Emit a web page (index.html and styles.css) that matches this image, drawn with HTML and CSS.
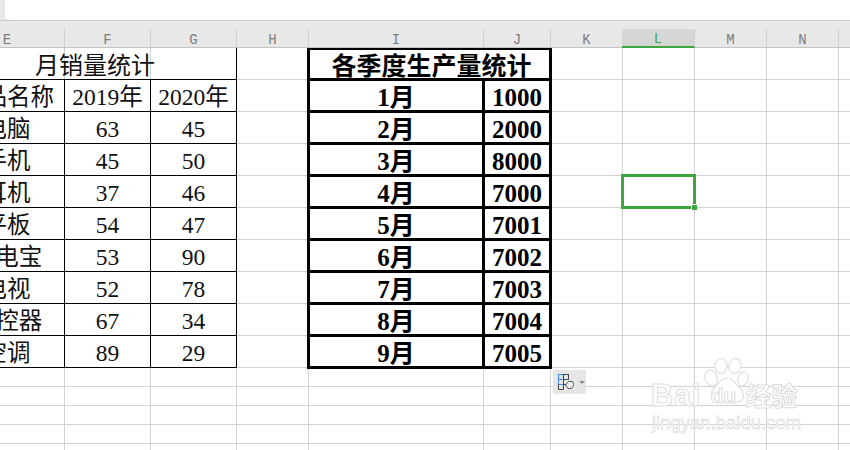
FILE: index.html
```html
<!DOCTYPE html>
<html lang="zh-CN">
<head>
<meta charset="utf-8">
<title>各季度生产量统计</title>
<link rel="stylesheet" href="styles.css">
</head>
<body>
<div class="app">
  <div class="formula-strip"><div class="formula-bar"></div></div>
  <div class="col-header">
    <div class="col">E</div><div class="col">F</div><div class="col">G</div><div class="col">H</div>
    <div class="col">I</div><div class="col">J</div><div class="col">K</div>
    <div class="col col-active">L</div><div class="col">M</div><div class="col">N</div><div class="col"></div>
  </div>
  <div class="sheet">
    <div class="cell title span-3">月销量统计</div>
    <div class="cell first">产品名称</div><div class="cell">2019年</div><div class="cell">2020年</div>
    <div class="cell first">电脑</div><div class="cell">63</div><div class="cell">45</div>
    <div class="cell first">手机</div><div class="cell">45</div><div class="cell">50</div>
    <div class="cell first">耳机</div><div class="cell">37</div><div class="cell">46</div>
    <div class="cell first">平板</div><div class="cell">54</div><div class="cell">47</div>
    <div class="cell first">充电宝</div><div class="cell">53</div><div class="cell">90</div>
    <div class="cell first">电视</div><div class="cell">52</div><div class="cell">78</div>
    <div class="cell first">遥控器</div><div class="cell">67</div><div class="cell">34</div>
    <div class="cell first">空调</div><div class="cell">89</div><div class="cell">29</div>

    <div class="prod">
      <div class="pcell prod-title">各季度生产量统计</div>
      <div class="pcell">1月</div><div class="pcell">1000</div>
      <div class="pcell">2月</div><div class="pcell">2000</div>
      <div class="pcell">3月</div><div class="pcell">8000</div>
      <div class="pcell">4月</div><div class="pcell">7000</div>
      <div class="pcell">5月</div><div class="pcell">7001</div>
      <div class="pcell">6月</div><div class="pcell">7002</div>
      <div class="pcell">7月</div><div class="pcell">7003</div>
      <div class="pcell">8月</div><div class="pcell">7004</div>
      <div class="pcell">9月</div><div class="pcell">7005</div>
    </div>

    <div class="selected"><span class="handle"></span></div>

    <div class="paste-options">
      <svg class="paste-icon" width="16" height="16" viewBox="0 0 16 16" fill="none">
        <rect x="0.5" y="0.5" width="5" height="5" fill="#cfe0fb" stroke="#4a86e8"/>
        <rect x="5.5" y="0.5" width="5" height="5" stroke="#444"/>
        <rect x="0.5" y="5.5" width="5" height="5" stroke="#4a86e8"/>
        <path d="M0.5 10.5V15.5H5.5V10.5M5.5 5.5V10.5H8" stroke="#444"/>
        <path d="M10.5 7.5L14.5 7.5L16 11L13.5 14.5H10L7.5 11Z" fill="#eee" stroke="#555"/>
      </svg>
      <span class="caret"></span>
    </div>
  </div>

  <div class="watermark">
    <svg class="paw" width="46" height="46" viewBox="0 0 46 46" fill="#fff" stroke="#dedede" stroke-width="1.2">
      <ellipse cx="8" cy="20" rx="6" ry="8" transform="rotate(-20 8 20)"/>
      <ellipse cx="18" cy="8" rx="6" ry="7.5"/>
      <ellipse cx="32" cy="8" rx="6" ry="7.5" transform="rotate(10 32 8)"/>
      <ellipse cx="40" cy="21" rx="5" ry="7" transform="rotate(15 40 21)"/>
      <path d="M24 20C18 20 16 25 12 29C7 33 7 43 15 44C19 45 21 43 24 43C28 43 31 45 35 44C43 42 41 33 36 29C32 25 30 20 24 20Z"/>
    </svg>
    <div class="wm-brand"><span class="wm-bai">Bai</span><span class="wm-du">du</span><span class="wm-cn">经验</span></div>
    <div class="wm-url">jingyan.baidu.com</div>
  </div>
</div>
</body>
</html>
```

FILE: styles.css
```css
* { box-sizing: border-box; }

html, body {
  margin: 0;
  padding: 0;
  width: 850px;
  height: 450px;
  overflow: hidden;
  background: #fff;
}

.app {
  position: relative;
  width: 850px;
  height: 450px;
  overflow: hidden;
  font-family: "Liberation Serif", "Noto Sans CJK SC", serif;
}

/* Formula bar */
.formula-strip {
  height: 21px;
  padding-left: 5px;
  background: #e8e8e8;
  border-bottom: 1px solid #cbcbcb;
}
.formula-bar {
  height: 20px;
  background: #fff;
  border-bottom-left-radius: 5px;
}

/* Column headers */
.col-header {
  display: grid;
  grid-template-columns: 115px 86px 86px 72px 175px 67px 72px 72px 72px 72px 72px;
  width: 900px;
  height: 27px;
  margin-left: -50px;
  padding-top: 8px;
  background: #e8e8e8;
  border-bottom: 1px solid #c4c4c4;
}
.col {
  display: flex;
  align-items: center;
  justify-content: center;
  padding-top: 3px;
  border-right: 1px solid #cfcfcf;
  color: #7d7d7d;
  font-family: "Liberation Mono", monospace;
  font-size: 14px;
  line-height: 1;
}
.col-active {
  margin-left: -1px;
  background: #d6d6d6;
  border-bottom: 2px solid #3fa53f;
  margin-bottom: -1px;
  color: #3fa53f;
}

/* Sheet */
.sheet {
  position: relative;
  display: grid;
  grid-template-columns: 115px 86px 86px 72px 175px 67px 72px 72px 72px 72px 72px;
  grid-template-rows: repeat(10, 32px) repeat(5, 19px);
  width: 900px;
  height: 402px;
  margin-left: -50px;
  background-image:
    repeating-linear-gradient(to bottom, transparent 0 31px, #d2d2d2 31px 32px),
    linear-gradient(#d2d2d2, #d2d2d2), linear-gradient(#d2d2d2, #d2d2d2),
    linear-gradient(#d2d2d2, #d2d2d2), linear-gradient(#d2d2d2, #d2d2d2),
    linear-gradient(#d2d2d2, #d2d2d2), linear-gradient(#d2d2d2, #d2d2d2),
    linear-gradient(#d2d2d2, #d2d2d2), linear-gradient(#d2d2d2, #d2d2d2),
    linear-gradient(#d2d2d2, #d2d2d2), linear-gradient(#d2d2d2, #d2d2d2),
    repeating-linear-gradient(to bottom, transparent 0 18px, #d2d2d2 18px 19px);
  background-size:
    100% 320px,
    1px 100%, 1px 100%, 1px 100%, 1px 100%, 1px 100%,
    1px 100%, 1px 100%, 1px 100%, 1px 100%, 1px 100%,
    100% 82px;
  background-position:
    0 0,
    114px 0, 200px 0, 286px 0, 358px 0, 533px 0,
    600px 0, 672px 0, 744px 0, 816px 0, 888px 0,
    0 320px;
  background-repeat: no-repeat;
}

.cell {
  display: flex;
  align-items: center;
  justify-content: center;
  padding-top: 4px;
  border-right: 1px solid #000;
  border-bottom: 1px solid #000;
  color: #111;
  font-size: 23.5px;
  line-height: 1;
  white-space: nowrap;
}
.first { grid-column: 1; }
.title { padding-left: 4px; font-size: 24px; }
.span-3 { grid-column: 1 / span 3; }

/* Thick-bordered production table */
.prod {
  grid-column: 5 / span 2;
  grid-row: 1 / span 10;
  display: grid;
  grid-template-columns: 172px 64px;
  grid-template-rows: 28px repeat(9, 29px);
  gap: 3px;
  margin: 0 -1px -1px -2px;
  padding: 2px 3px 3px;
  background: #000;
}
.pcell {
  display: flex;
  align-items: center;
  justify-content: center;
  padding-top: 4px;
  background: #fff;
  color: #000;
  font-size: 25px;
  font-weight: 700;
  line-height: 1;
  white-space: nowrap;
}
.prod-title { grid-column: 1 / span 2; padding-left: 4px; }

/* Active cell */
.selected {
  grid-column: 8;
  grid-row: 5;
  position: relative;
  margin: -2px -1px -1px -2px;
  border: 3px solid #3fa53f;
}
.handle {
  position: absolute;
  right: -4px;
  bottom: -4px;
  width: 6px;
  height: 6px;
  background: #3fa53f;
  border: 1px solid #fff;
  border-width: 1px 0 0 1px;
}

/* Paste options */
.paste-options {
  position: absolute;
  left: 603px;
  top: 322px;
  display: flex;
  align-items: center;
  gap: 5px;
  width: 33px;
  height: 24px;
  padding-left: 5px;
  background: #e6e6e6;
}
.paste-icon { flex: none; }
.caret {
  width: 0;
  height: 0;
  border-left: 3px solid transparent;
  border-right: 3px solid transparent;
  border-top: 3px solid #8a8a8a;
}

/* Watermark */
.watermark {
  position: absolute;
  left: 650px;
  top: 358px;
  width: 160px;
  height: 74px;
  color: #fff;
  filter: blur(0.4px);
}
.paw {
  position: absolute;
  left: 53px;
  top: 0;
}
.wm-brand {
  position: absolute;
  left: 1px;
  top: 23px;
  display: flex;
  align-items: center;
  height: 28px;
  font-family: "Liberation Sans", sans-serif;
  font-weight: 700;
  line-height: 1;
  -webkit-text-stroke: 1px #dcdcdc;
}
.wm-bai { font-size: 31px; letter-spacing: 0.5px; }
.wm-du { margin-left: 10px; font-size: 21px; }
.wm-cn {
  margin-left: 9px;
  font-family: "Noto Sans CJK SC", sans-serif;
  font-size: 26px;
}
.wm-url {
  position: absolute;
  left: 2px;
  top: 56px;
  font-family: "Liberation Sans", sans-serif;
  font-size: 18.5px;
  font-weight: 400;
  line-height: 1;
  white-space: nowrap;
  -webkit-text-stroke: 0.8px #dfdfdf;
}
```
